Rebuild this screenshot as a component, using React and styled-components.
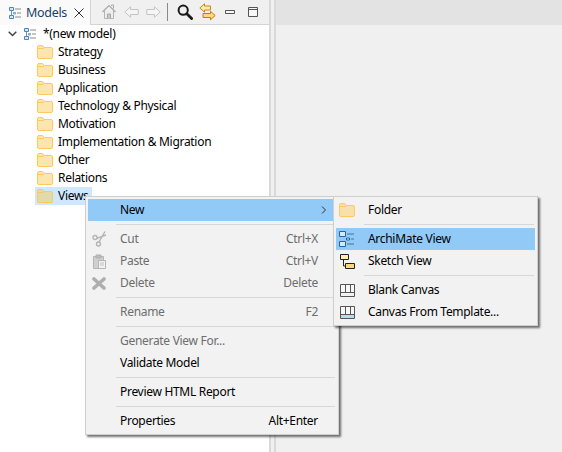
import styled, { createGlobalStyle } from "styled-components";

const GlobalStyle = createGlobalStyle`
  html, body {
    margin: 0;
    padding: 0;
    background: #f0f0f0;
  }
  body {
    font-family: "Noto Sans", "Open Sans", sans-serif;
    font-size: 12px;
    letter-spacing: -0.3px;
    color: #000;
  }
`

const Page = styled.div`
  position: relative;
  display: flex;
  width: 562px;
  height: 452px;
  overflow: hidden;
`

const ModelPane = styled.section`
  width: 269px;
  display: flex;
  flex-direction: column;
  background: #fff;
  border-right: 2px solid #d9d9d9;
`

const PaneHeader = styled.header`
  height: 24px;
  display: flex;
  background: #f0f0f0;
  border-bottom: 1px solid #d4d4d4;
`

const Tab = styled.div`
  width: 91px;
  height: 25px;
  padding-left: 9px;
  box-sizing: border-box;
  display: flex;
  align-items: center;
  background: #fafafa;
  border-right: 1px solid #d4d4d4;
`

const TabTitle = styled.span`
  width: 48px;
  margin-left: 5px;
  font-size: 12.5px;
  color: #1c3f66;
`

const TabClose = styled.svg`
  width: 10px;
  height: 10px;
`

const Toolbar = styled.div`
  flex: 1;
  display: flex;
  align-items: center;
  padding-left: 6px;
`

const ToolSlot = styled.div`
  width: ${(p) => p.$w || 22}px;
  height: 24px;
  display: flex;
  align-items: center;
  justify-content: center;
`

const ToolDivider = styled.div`
  width: 1px;
  height: 18px;
  margin: 0 6px 0 2px;
  background: #8a8a8a;
`

const Tree = styled.ul`
  list-style: none;
  margin: 0;
  padding: 0;
`

const TreeRow = styled.li`
  height: 18px;
  display: flex;
  align-items: center;
  padding-left: ${(p) => (p.$root ? 8 : 37)}px;
  line-height: 18px;
`

const TreeToggle = styled.svg`
  width: 9px;
  height: 6px;
  margin-right: 7px;
`

const TreeLabel = styled.span`
  margin-left: ${(p) => p.$gap || 5}px;
  white-space: nowrap;
`

const Selection = styled.div`
  display: flex;
  align-items: center;
  height: 18px;
  margin-left: -2px;
  padding: 0 3px 0 2px;
  background: #cde8ff;
`

const Gutter = styled.div`
  width: 3px;
  border-right: 2px solid #d9d9d9;
  background: #f0f0f0;
`

const EditorPane = styled.section`
  flex: 1;
  display: flex;
  flex-direction: column;
  background: #f0f0f0;
`

const EditorHeader = styled.div`
  height: 25px;
  background: #e3e3e3;
`

const Menu = styled.div`
  position: absolute;
  left: ${(p) => p.$x}px;
  top: ${(p) => p.$y}px;
  width: ${(p) => p.$w}px;
  box-sizing: border-box;
  padding: 2px;
  background: #f2f2f2;
  border: 1px solid #cfcfcf;
  box-shadow: 2px 2px 2px rgba(0, 0, 0, 0.55);
`

const MenuRow = styled.div`
  height: 22px;
  box-sizing: border-box;
  position: relative;
  display: flex;
  align-items: center;
  padding: 0 18px 2px 0;
  background: ${(p) => (p.$active ? "#91c9f7" : "transparent")};
  color: ${(p) => (p.$disabled ? "#6d6d6d" : "#000")};
  white-space: nowrap;
`

const MenuIcon = styled.div`
  width: 22px;
  margin: 2px 10px 0 0;
  flex: none;
  display: flex;
  align-items: center;
  justify-content: center;
`

const MenuLabel = styled.span`
  flex: 1;
`

const Shortcut = styled.span`
  margin-left: 16px;
`

const MenuArrow = styled.svg`
  position: absolute;
  right: 9px;
  top: 7px;
  width: 6px;
  height: 8px;
`

const MenuSeparator = styled.div`
  height: 1px;
  margin: 3px 1px 3px 28px;
  background: #d7d7d7;
`

const FolderIcon = ({ fill = "#fde6ad", stroke = "#fcc85f" }) => (
  <svg width="16" height="14" viewBox="0 0 16 14">
    <path d="M.5 12V2Q.5 .5 2 .5H5.5L7.5 2.5H14Q15.5 2.5 15.5 4V12Q15.5 13.5 14 13.5H2Q.5 13.5 .5 12Z" fill={fill} stroke={stroke} />
    <path d="M1 3.5H6L7.5 2.5" fill="none" stroke={stroke} />
  </svg>
)

const ModelIcon = () => (
  <svg width="12" height="12" viewBox="0 0 12 12" fill="none">
    <path d="M.5 .5H4.5V3.5H.5ZM.5 8.5H4.5V11.5H.5Z" fill="#d5e8f8" stroke="#4a86bd" />
    <path d="M2.5 3.5V8.5" stroke="#6b8fb0" />
    <path d="M6 2H12M6 10H12" stroke="#8a8a8a" />
    <path d="M4.5 5.5H6.5V7H4.5Z" fill="#d5e8f8" stroke="#4a86bd" strokeWidth=".7" />
    <path d="M8 6H12" stroke="#8a8a8a" />
  </svg>
)

const ArchiMateIcon = () => (
  <svg width="16" height="16" viewBox="0 0 16 16" fill="none">
    <path d="M.5 .5H6.5V5.5H.5ZM.5 10.5H6.5V15.5H.5Z" fill="#d5e8f8" stroke="#1f66a8" />
    <path d="M8 3H15M8 13H15" stroke="#4d6f8e" />
    <path d="M7.5 7H10.5V9H7.5Z" fill="#d5e8f8" stroke="#1f66a8" />
    <path d="M12 8H15" stroke="#4d6f8e" />
  </svg>
)

const SketchIcon = () => (
  <svg width="15" height="15" viewBox="0 0 15 15">
    <path d="M.5 .5H8.5V5.5H.5Z" fill="#fdf0a8" stroke="#222" />
    <path d="M5.5 9.5H14.5V14.5H5.5Z" fill="#fcd67a" stroke="#222" />
    <path d="M3.5 5.5V12H5.5" fill="none" stroke="#222" />
  </svg>
)

const CanvasIcon = ({ base = "#f2f2f2" }) => (
  <svg width="15" height="13" viewBox="0 0 15 13">
    <path d="M.5 .5H14.5V12.5H.5Z" fill="#f7f7f7" stroke="#555" />
    <path d="M1 9H14V12H1Z" fill={base} />
    <path d="M.5 8.5H14.5M5.5 .5V8.5M10.5 .5V8.5" fill="none" stroke="#555" />
  </svg>
)

const ScissorsIcon = () => (
  <svg width="15" height="16" viewBox="0 0 15 16" fill="none" stroke="#b4b4b4" strokeWidth="1.4">
    <circle cx="3" cy="6.5" r="2" />
    <circle cx="6.5" cy="13" r="2" />
    <path d="M4.8 7.3L14 4M7 11L13 .5" />
  </svg>
)

const PasteIcon = () => (
  <svg width="13" height="15" viewBox="0 0 13 15">
    <path d="M.5 2.5H10.5V14.5H.5Z" fill="#d0d0d0" stroke="#b5b5b5" />
    <path d="M3 1H8V4H3Z" fill="#bcbcbc" stroke="#b0b0b0" />
    <path d="M5.5 6.5H12.5V14.5H5.5Z" fill="#f2f2f2" stroke="#b5b5b5" />
    <path d="M7 9H11M7 11H11" stroke="#c0c0c0" />
  </svg>
)

const DeleteIcon = () => (
  <svg width="14" height="13" viewBox="0 0 14 13">
    <path d="M2 2L12 11M12 2L2 11" stroke="#aeaeae" strokeWidth="3.6" strokeLinecap="round" />
  </svg>
)

const HomeIcon = () => (
  <svg width="14" height="16" viewBox="0 0 14 16" fill="none">
    <path d="M9.5 2V1H11.5V4.5" stroke="#a8a8a8" />
    <path d="M.5 8L7 1.5L13.5 8" stroke="#a8a8a8" strokeWidth="1.2" />
    <path d="M2.5 7V14.5H11.5V7" fill="#ededed" stroke="#b4b4b4" />
    <path d="M5.5 14.5V10H8.5V14.5" fill="#c8c8c8" stroke="#a8a8a8" />
  </svg>
)

const ArrowLeftIcon = () => (
  <svg width="15" height="12" viewBox="0 0 15 12">
    <path d="M.8 6L6.5 .8V3.5H14.2V8.5H6.5V11.2Z" fill="#f5f5f5" stroke="#c4c4c4" strokeLinejoin="round" />
  </svg>
)

const ArrowRightIcon = () => (
  <svg width="15" height="12" viewBox="0 0 15 12">
    <path d="M14.2 6L8.5 .8V3.5H.8V8.5H8.5V11.2Z" fill="#f5f5f5" stroke="#c4c4c4" strokeLinejoin="round" />
  </svg>
)

const SearchIcon = () => (
  <svg width="16" height="16" viewBox="0 0 16 16" fill="none">
    <circle cx="6.2" cy="6.2" r="4.6" stroke="#1a1a1a" strokeWidth="2" />
    <path d="M9.8 9.8L14.6 14.6" stroke="#1a1a1a" strokeWidth="2.8" strokeLinecap="round" />
  </svg>
)

const SyncIcon = () => (
  <svg width="17" height="18" viewBox="0 0 17 18">
    <path d="M.8 5L5.5 .8V3H11.5V7H5.5V9.2Z" fill="#fbe9b0" stroke="#c98a12" strokeLinejoin="round" />
    <path d="M16.2 12.5L11.5 8.3V10.5H4V14.5H11.5V16.8Z" fill="#f8d888" stroke="#c47f0c" strokeLinejoin="round" />
  </svg>
)

const MinimizeIcon = () => (
  <svg width="10" height="4" viewBox="0 0 10 4">
    <path d="M.5 .5H9.5V3.5H.5Z" fill="#f7f7f7" stroke="#555" />
  </svg>
)

const MaximizeIcon = () => (
  <svg width="10" height="10" viewBox="0 0 10 10">
    <path d="M.5 .5H9.5V9.5H.5Z" fill="#f7f7f7" stroke="#555" />
    <path d="M1 2.5H9" stroke="#555" />
  </svg>
)

const folders = [
  "Strategy",
  "Business",
  "Application",
  "Technology & Physical",
  "Motivation",
  "Implementation & Migration",
  "Other",
  "Relations",
]

const Item = ({ icon, label, shortcut, ...rest }) => (
  <MenuRow {...rest}>
    <MenuIcon>{icon}</MenuIcon>
    <MenuLabel>{label}</MenuLabel>
    {shortcut && <Shortcut>{shortcut}</Shortcut>}
  </MenuRow>
)

export default function App() {
  return (
    <Page>
      <GlobalStyle />

      <ModelPane>
        <PaneHeader>
          <Tab>
            <ModelIcon />
            <TabTitle>Models</TabTitle>
            <TabClose viewBox="0 0 10 10">
              <path d="M.5 .5L9.5 9.5M9.5 .5L.5 9.5" stroke="#333" fill="none" />
            </TabClose>
          </Tab>
          <Toolbar>
            <ToolSlot $w={23}><HomeIcon /></ToolSlot>
            <ToolSlot><ArrowLeftIcon /></ToolSlot>
            <ToolSlot $w={23}><ArrowRightIcon /></ToolSlot>
            <ToolDivider />
            <ToolSlot><SearchIcon /></ToolSlot>
            <ToolSlot $w={23}><SyncIcon /></ToolSlot>
            <ToolSlot><MinimizeIcon /></ToolSlot>
            <ToolSlot $w={23}><MaximizeIcon /></ToolSlot>
          </Toolbar>
        </PaneHeader>

        <Tree>
          <TreeRow $root>
            <TreeToggle viewBox="0 0 9 6">
              <path d="M.7 .7L4.5 4.5L8.3 .7" stroke="#444" strokeWidth="1.5" fill="none" />
            </TreeToggle>
            <ModelIcon />
            <TreeLabel $gap={7}>*(new model)</TreeLabel>
          </TreeRow>
          {folders.map((name) => (
            <TreeRow key={name}>
              <FolderIcon />
              <TreeLabel>{name}</TreeLabel>
            </TreeRow>
          ))}
          <TreeRow>
            <Selection>
              <FolderIcon fill="#e0dba8" />
              <TreeLabel>Views</TreeLabel>
            </Selection>
          </TreeRow>
        </Tree>
      </ModelPane>

      <Gutter />

      <EditorPane>
        <EditorHeader />
      </EditorPane>

      <Menu $x={85} $y={196} $w={254}>
        <MenuRow $active>
          <MenuIcon />
          <MenuLabel>New</MenuLabel>
          <MenuArrow viewBox="0 0 6 8">
            <path d="M1 .5L4.5 4L1 7.5" stroke="#333" fill="none" />
          </MenuArrow>
        </MenuRow>
        <MenuSeparator />
        <Item $disabled icon={<ScissorsIcon />} label="Cut" shortcut="Ctrl+X" />
        <Item $disabled icon={<PasteIcon />} label="Paste" shortcut="Ctrl+V" />
        <Item $disabled icon={<DeleteIcon />} label="Delete" shortcut="Delete" />
        <MenuSeparator />
        <Item $disabled label="Rename" shortcut="F2" />
        <MenuSeparator />
        <Item $disabled label="Generate View For..." />
        <Item label="Validate Model" />
        <MenuSeparator />
        <Item label="Preview HTML Report" />
        <MenuSeparator />
        <Item label="Properties" shortcut="Alt+Enter" />
      </Menu>

      <Menu $x={333} $y={196} $w={205}>
        <Item icon={<FolderIcon fill="#f8e0ab" />} label="Folder" />
        <MenuSeparator />
        <Item $active icon={<ArchiMateIcon />} label="ArchiMate View" />
        <Item icon={<SketchIcon />} label="Sketch View" />
        <MenuSeparator />
        <Item icon={<CanvasIcon />} label="Blank Canvas" />
        <Item icon={<CanvasIcon base="#b5dcf7" />} label="Canvas From Template..." />
      </Menu>
    </Page>
  )
}
